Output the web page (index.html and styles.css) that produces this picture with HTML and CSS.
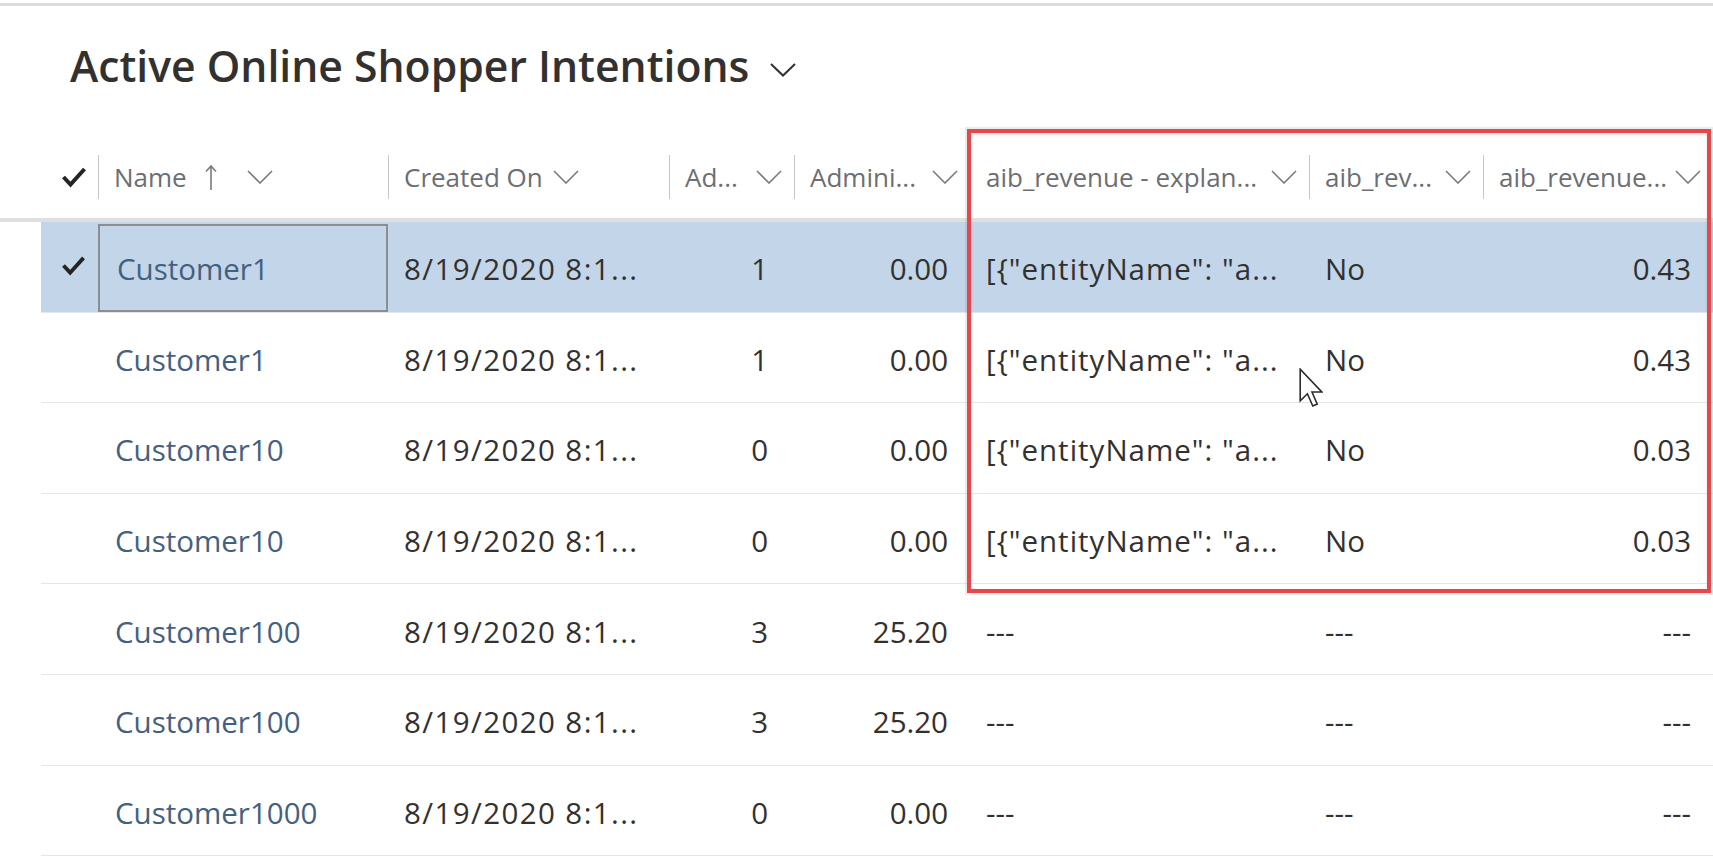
FILE: index.html
```html
<!DOCTYPE html>
<html lang="en">
<head>
<meta charset="utf-8">
<title>Active Online Shopper Intentions</title>
<link rel="stylesheet" href="styles.css">
</head>
<body>
<div class="topline"></div>
<div class="titlebar">
  <h1 class="title">Active Online Shopper Intentions</h1>
  <svg class="title-chev" viewBox="0 0 26 14" width="26" height="14"><polyline points="1,1 13,12.5 25,1" fill="none" stroke="#323130" stroke-width="2"/></svg>
</div>

<div class="grid">
  <div class="hrow">
    <div class="hcell hcheck">
      <svg class="check" viewBox="0 0 26 22" width="26" height="22"><polyline points="2.5,11 9.5,18.5 23.5,3" fill="none" stroke="#252423" stroke-width="4"/></svg>
    </div>
    <div class="hcell sep">
      <span class="htext">Name</span>
      <svg class="sort" viewBox="0 0 12 26" width="12" height="26"><path d="M6 2 V26 M1 7.5 L6 2 L11 7.5" fill="none" stroke="#7a7b7e" stroke-width="1.6"/></svg>
      <svg class="chev name-chev" viewBox="0 0 26 14" width="26" height="14"><polyline points="1,1 13,13 25,1" fill="none" stroke="#7a7b7e" stroke-width="1.6"/></svg>
    </div>
    <div class="hcell sep">
      <span class="htext">Created On</span>
      <svg class="chev" viewBox="0 0 26 14" width="26" height="14"><polyline points="1,1 13,13 25,1" fill="none" stroke="#7a7b7e" stroke-width="1.6"/></svg>
    </div>
    <div class="hcell sep end">
      <span class="htext">Ad...</span>
      <svg class="chev" viewBox="0 0 26 14" width="26" height="14"><polyline points="1,1 13,13 25,1" fill="none" stroke="#7a7b7e" stroke-width="1.6"/></svg>
    </div>
    <div class="hcell sep end">
      <span class="htext">Admini...</span>
      <svg class="chev" viewBox="0 0 26 14" width="26" height="14"><polyline points="1,1 13,13 25,1" fill="none" stroke="#7a7b7e" stroke-width="1.6"/></svg>
    </div>
    <div class="hcell sep end">
      <span class="htext">aib_revenue - explan...</span>
      <svg class="chev" viewBox="0 0 26 14" width="26" height="14"><polyline points="1,1 13,13 25,1" fill="none" stroke="#7a7b7e" stroke-width="1.6"/></svg>
    </div>
    <div class="hcell sep end">
      <span class="htext">aib_rev...</span>
      <svg class="chev" viewBox="0 0 26 14" width="26" height="14"><polyline points="1,1 13,13 25,1" fill="none" stroke="#7a7b7e" stroke-width="1.6"/></svg>
    </div>
    <div class="hcell sep end last">
      <span class="htext">aib_revenue...</span>
      <svg class="chev" viewBox="0 0 26 14" width="26" height="14"><polyline points="1,1 13,13 25,1" fill="none" stroke="#7a7b7e" stroke-width="1.6"/></svg>
    </div>
  </div>

  <div class="rows">
    <div class="row selected">
      <div class="cell ccheck"><svg class="check" viewBox="0 0 26 22" width="25" height="21"><polyline points="2.5,11 9.5,18.5 23.5,3" fill="none" stroke="#252423" stroke-width="4"/></svg></div>
      <div class="cell name focused">Customer1</div>
      <div class="cell date">8/19/2020 8:1...</div>
      <div class="cell num nad">1</div>
      <div class="cell num">0.00</div>
      <div class="cell json">[{"entityName": "a...</div>
      <div class="cell">No</div>
      <div class="cell num">0.43</div>
    </div>
    <div class="row">
      <div class="cell ccheck"></div>
      <div class="cell name">Customer1</div>
      <div class="cell date">8/19/2020 8:1...</div>
      <div class="cell num nad">1</div>
      <div class="cell num">0.00</div>
      <div class="cell json">[{"entityName": "a...</div>
      <div class="cell">No</div>
      <div class="cell num">0.43</div>
    </div>
    <div class="row">
      <div class="cell ccheck"></div>
      <div class="cell name">Customer10</div>
      <div class="cell date">8/19/2020 8:1...</div>
      <div class="cell num nad">0</div>
      <div class="cell num">0.00</div>
      <div class="cell json">[{"entityName": "a...</div>
      <div class="cell">No</div>
      <div class="cell num">0.03</div>
    </div>
    <div class="row">
      <div class="cell ccheck"></div>
      <div class="cell name">Customer10</div>
      <div class="cell date">8/19/2020 8:1...</div>
      <div class="cell num nad">0</div>
      <div class="cell num">0.00</div>
      <div class="cell json">[{"entityName": "a...</div>
      <div class="cell">No</div>
      <div class="cell num">0.03</div>
    </div>
    <div class="row">
      <div class="cell ccheck"></div>
      <div class="cell name">Customer100</div>
      <div class="cell date">8/19/2020 8:1...</div>
      <div class="cell num nad">3</div>
      <div class="cell num">25.20</div>
      <div class="cell">---</div>
      <div class="cell">---</div>
      <div class="cell num">---</div>
    </div>
    <div class="row">
      <div class="cell ccheck"></div>
      <div class="cell name">Customer100</div>
      <div class="cell date">8/19/2020 8:1...</div>
      <div class="cell num nad">3</div>
      <div class="cell num">25.20</div>
      <div class="cell">---</div>
      <div class="cell">---</div>
      <div class="cell num">---</div>
    </div>
    <div class="row">
      <div class="cell ccheck"></div>
      <div class="cell name">Customer1000</div>
      <div class="cell date">8/19/2020 8:1...</div>
      <div class="cell num nad">0</div>
      <div class="cell num">0.00</div>
      <div class="cell">---</div>
      <div class="cell">---</div>
      <div class="cell num">---</div>
    </div>
  </div>
</div>

<div class="highlight"></div>
<svg class="cursor" viewBox="0 0 12 20" width="24" height="40"><path d="M0.6 0.6 V16.4 L4.2 12.9 L6.9 19 L9.1 18 L6.5 12 H11.4 Z" fill="#ffffff" stroke="#2b2b2b" stroke-width="0.8" stroke-linejoin="miter"/></svg>
</body>
</html>
```

FILE: styles.css
```css
* { box-sizing: border-box; }

html, body {
  margin: 0;
  padding: 0;
  background: #ffffff;
}

body {
  font-family: "Open Sans", "Noto Sans", "DejaVu Sans", sans-serif;
  color: #323130;
  width: 1713px;
  height: 860px;
  overflow: hidden;
  position: relative;
}

.topline {
  margin-top: 3px;
  height: 3px;
  background: #dcdcdc;
}

.titlebar {
  display: flex;
  align-items: center;
  margin: 32px 0 0 70px;
  height: 56px;
}

.title {
  margin: 0;
  font-size: 42.7px;
  line-height: 56px;
  font-weight: 600;
  color: #323130;
}

.title-chev {
  margin-left: 21px;
  margin-top: 8px;
}

.grid {
  margin-top: 42px;
}

.hrow {
  display: grid;
  grid-template-columns: 57px 290px 281px 125px 176px 339px 174px 1fr;
  padding-left: 41px;
  height: 86px;
  border-bottom: 4px solid #dfdfdf;
}

.hcell {
  display: flex;
  align-items: center;
  position: relative;
  padding-left: 16px;
  padding-right: 12px;
  font-size: 26px;
  color: #6c6e72;
  white-space: nowrap;
  overflow: hidden;
}

.hcell.sep::before {
  content: "";
  position: absolute;
  left: 0;
  top: 19px;
  height: 44px;
  width: 1px;
  background: #c8c6c4;
}

.hcheck {
  padding-left: 20px;
  padding-right: 0;
}

.check { display: block; flex: none; }

.sort {
  margin-left: 18px;
  flex: none;
}

.chev {
  margin-left: 10px;
  flex: none;
}

.name-chev {
  margin-left: 30px;
}

.hcell.end .chev {
  margin-left: auto;
}

.rows {
  margin-left: 41px;
}

.row {
  display: grid;
  grid-template-columns: 57px 290px 281px 125px 176px 339px 174px 1fr;
  height: 90.6px;
  border-bottom: 1px solid #e6e6e6;
}

.row.selected {
  background: #c2d5e9;
}

.cell {
  display: flex;
  align-items: center;
  padding-top: 4px;
  padding-left: 16px;
  padding-right: 22px;
  font-size: 29.5px;
  color: #323130;
  white-space: nowrap;
  overflow: hidden;
}

.cell.date {
  letter-spacing: 1.4px;
}

.cell.json {
  letter-spacing: 1px;
}

.cell.ccheck {
  padding-left: 20px;
  padding-right: 0;
  padding-top: 0;
  padding-bottom: 2px;
}

.cell.name {
  padding-left: 17px;
  color: #45607f;
}

.cell.name.focused {
  padding-left: 17px;
  padding-top: 2px;
  border: 2px solid #8b8d90;
  margin-top: 2px;
}

.cell.num {
  justify-content: flex-end;
}

.cell.nad {
  padding-right: 26px;
}

.highlight {
  position: absolute;
  left: 967px;
  top: 129px;
  width: 744px;
  height: 464px;
  border: 4px solid #e5474b;
  box-shadow: 0 0 0 2px rgba(0, 0, 0, 0.08), inset 0 2px 3px rgba(0, 0, 0, 0.12);
  pointer-events: none;
}

.cursor {
  position: absolute;
  left: 1299px;
  top: 368px;
}
```
